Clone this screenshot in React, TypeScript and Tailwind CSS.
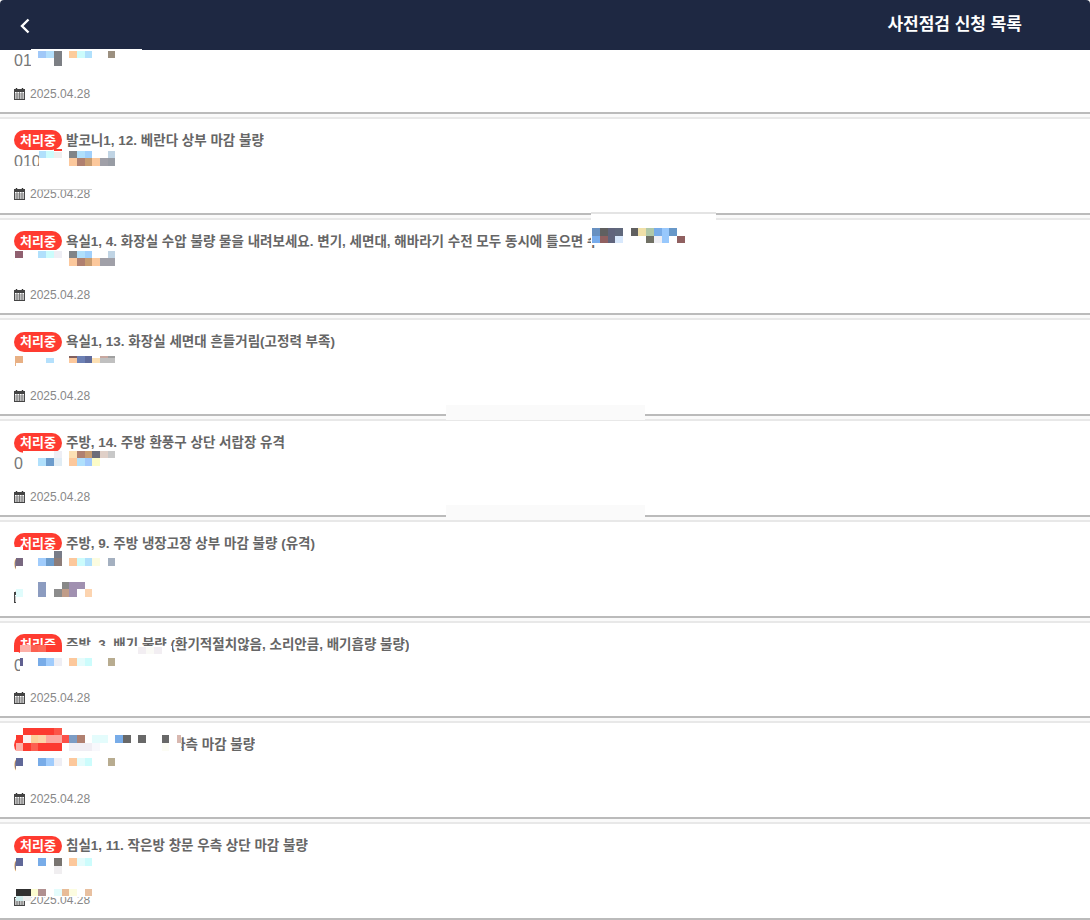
const FONT_STACK = "font-['Liberation_Sans','Noto_Sans_CJK_KR',sans-serif]";

type Request = { title: string; phone: string };

const REQUESTS: Request[] = [
  { title: "발코니1, 10. 베란다 창호 마감 불량", phone: "010-1234-56" },
  { title: "발코니1, 12. 베란다 상부 마감 불량", phone: "010-1234-56" },
  { title: "욕실1, 4. 화장실 수압 불량 물을 내려보세요. 변기, 세면대, 해바라기 수전 모두 동시에 틀으면 수", phone: "010-1234-56" },
  { title: "욕실1, 13. 화장실 세면대 흔들거림(고정력 부족)", phone: "010-1234-56" },
  { title: "주방, 14. 주방 환풍구 상단 서랍장 유격", phone: "010-1234-56" },
  { title: "주방, 9. 주방 냉장고장 상부 마감 불량 (유격)", phone: "010-1234-56" },
  { title: "주방, 3. 배기 불량 (환기적절치않음, 소리안큼, 배기흡량 불량)", phone: "010-1234-56" },
  { title: "거실1, 15. 거실 창 좌측 마감 불량", phone: "010-1234-56" },
  { title: "침실1, 11. 작은방 창문 우측 상단 마감 불량", phone: "010-1234-56" },
];

// x1, x2, y1, y2, colour
type Cell = [number, number, number, number, string];

// Blurred patches that sit on top of the list.
const PATCHES: Cell[] = [
  // row 1
  [31, 142, 49, 70, "#fff"],
  [38, 46, 51, 58, "#a0c8f8"], [46, 54, 51, 58, "#b4e0fc"], [54, 62, 51, 66, "#7c7f84"],
  [69, 77, 51, 58, "#fccc9c"], [77, 85, 51, 58, "#ccfcfc"], [85, 92, 51, 58, "#b0e0fc"], [108, 115, 51, 58, "#9c9080"],
  // row 2
  [39, 116, 150, 170, "#fff"], [14, 39, 166, 171, "#fff"],
  [54, 62, 149, 151, "#ff3b30"],
  [39, 46, 151, 158, "#b0e0fc"], [46, 54, 151, 158, "#ccfcfc"], [54, 62, 152, 158, "#eeeeee"],
  [69, 77, 151, 158, "#808488"], [77, 85, 151, 158, "#b0e0fc"], [85, 92, 151, 158, "#a0d0fc"], [108, 115, 151, 158, "#c0d4e4"],
  [69, 77, 158, 166, "#fcc89c"], [77, 85, 158, 166, "#b08070"], [85, 92, 158, 166, "#c89c70"], [92, 100, 158, 166, "#fcc89c"],
  [100, 108, 158, 166, "#a0a0a8"], [108, 115, 158, 166, "#989ca4"],
  [38, 92, 189, 190, "#cfcfcf"],
  // row 3
  [14, 116, 250, 272, "#fff"],
  [15, 23, 251, 258, "#906070"], [38, 46, 251, 258, "#b0e0fc"], [46, 54, 251, 258, "#ccfcfc"], [54, 62, 251, 258, "#eeeef4"],
  [69, 77, 251, 258, "#808488"], [77, 85, 251, 258, "#b0e0fc"], [85, 92, 251, 258, "#a0d0fc"], [108, 115, 251, 258, "#c0d4e4"],
  [69, 77, 258, 266, "#fcc89c"], [77, 85, 258, 266, "#b08070"], [85, 92, 258, 266, "#c89c70"], [92, 100, 258, 266, "#fcc89c"], [100, 115, 258, 266, "#a0a0a8"],
  [591, 716, 212, 245, "#fff"], [591, 716, 212, 214, "#e4e4e4"],
  [592, 600, 228, 236, "#6890c0"], [600, 608, 228, 236, "#606060"], [608, 615, 228, 236, "#60647c"], [615, 623, 228, 236, "#60687c"],
  [592, 600, 236, 243, "#78acec"], [600, 608, 236, 243, "#906060"], [608, 615, 236, 243, "#60647c"], [615, 623, 236, 243, "#d8e8fc"],
  [631, 638, 228, 236, "#606060"], [638, 646, 228, 236, "#f0e0a8"], [646, 654, 228, 236, "#b0c8a8"], [654, 662, 228, 236, "#78ace8"], [662, 669, 228, 236, "#98c8fc"], [669, 677, 228, 236, "#6898c8"],
  [646, 654, 236, 243, "#707064"], [654, 662, 236, 243, "#eeeef4"], [662, 669, 236, 243, "#98c8fc"], [677, 685, 236, 243, "#906060"],
  // row 4
  [14, 116, 352, 374, "#fff"],
  [15, 23, 356, 363, "#e8b084"], [15, 16, 363, 366, "#e8b084"], [46, 54, 358, 363, "#b4e0fc"],
  [69, 77, 356, 358, "#806060"], [69, 77, 358, 363, "#fcc89c"], [77, 85, 356, 363, "#6c80b4"], [85, 92, 356, 363, "#606c9c"], [92, 100, 358, 363, "#fce0b4"],
  [100, 108, 356, 358, "#c8a8a0"], [108, 115, 356, 358, "#a0a0a0"], [100, 115, 358, 363, "#c0c0c0"],
  // row 5
  [23, 116, 451, 474, "#fff"],
  [54, 62, 451, 458, "#eeeef4"], [69, 77, 451, 458, "#fce0b4"], [77, 85, 451, 458, "#b08070"], [85, 92, 451, 458, "#c89c70"], [92, 100, 451, 458, "#6c6c78"], [100, 108, 451, 458, "#e0d0c8"], [108, 115, 451, 458, "#c8c8c8"],
  [38, 46, 458, 466, "#b0e0fc"], [46, 54, 458, 466, "#6c9ccc"], [54, 62, 458, 466, "#e0ecf4"], [69, 77, 458, 466, "#fcc89c"], [77, 85, 458, 466, "#b0e0fc"], [85, 92, 458, 466, "#a0c8fc"], [92, 100, 458, 466, "#fcfcc8"],
  [446, 645, 405, 420, "#fafafa"],
  [446, 645, 505, 520, "#fafafa"],
  // row 6
  [16, 116, 550, 574, "#fff"], [14, 23, 547, 551, "#fff"],
  [54, 62, 551, 558, "#787c88"],
  [16, 23, 558, 566, "#786880"], [38, 46, 558, 566, "#a0ccfc"], [46, 54, 558, 566, "#6c9ccc"], [54, 62, 558, 566, "#8c7c78"],
  [69, 77, 558, 566, "#fcc89c"], [77, 85, 558, 566, "#ccfcfc"], [85, 92, 558, 566, "#b0e0fc"], [92, 100, 558, 566, "#fcfce0"], [108, 115, 558, 566, "#a4b0c0"],
  [16, 120, 574, 606, "#fff"],
  [38, 46, 582, 589, "#8c9cc0"], [62, 69, 582, 589, "#888888"], [69, 85, 582, 589, "#a090b0"],
  [16, 23, 589, 597, "#e0fcfc"], [38, 46, 589, 597, "#8c9cc0"], [54, 62, 589, 597, "#8c8c8c"], [62, 69, 589, 597, "#c09c88"], [69, 77, 589, 597, "#a090b0"], [85, 92, 589, 597, "#fcd4b0"],
  // row 7
  [20, 172, 646, 674, "#fff"],
  [14, 23, 645, 652, "#ff3b30"],
  [20, 31, 645, 652, "#fcb0a8"], [31, 38, 645, 652, "#fc6050"], [38, 46, 645, 652, "#fc6858"], [46, 62, 645, 652, "#ff3b30"],
  [138, 146, 647, 654, "#f2eef2"], [146, 154, 647, 654, "#fafaf6"], [154, 162, 647, 654, "#f2eef2"],
  [20, 23, 658, 666, "#606090"], [38, 46, 658, 666, "#78ace8"], [46, 54, 658, 666, "#a0ccfc"], [54, 62, 658, 666, "#eeeef4"],
  [69, 77, 658, 666, "#fcc89c"], [77, 85, 658, 666, "#e4fcfc"], [85, 92, 658, 666, "#ccfcfc"], [108, 115, 658, 666, "#b8ac90"],
  // row 8
  [16, 181, 726, 774, "#fff"],
  [23, 54, 728, 735, "#fc3a30"], [54, 62, 728, 735, "#fc5548"],
  [16, 23, 735, 743, "#fc3a30"], [23, 31, 735, 743, "#fcf0f0"], [31, 38, 735, 743, "#fcd098"], [38, 46, 735, 743, "#fcd4a8"], [46, 62, 735, 743, "#fca8a0"], [62, 69, 735, 743, "#fc5048"],
  [69, 77, 735, 743, "#7c9cc4"], [77, 85, 735, 743, "#b08070"], [92, 108, 735, 743, "#e4fcfc"], [115, 123, 735, 743, "#78ace8"], [123, 131, 735, 743, "#686868"], [138, 146, 735, 743, "#686868"], [162, 169, 735, 743, "#686868"], [177, 181, 735, 743, "#d8b8b0"],
  [16, 23, 743, 751, "#fcb0a8"], [23, 31, 743, 751, "#fc3a30"], [31, 38, 743, 751, "#fc6050"], [38, 62, 743, 751, "#fc3a30"], [69, 92, 743, 751, "#f0eef4"], [92, 100, 743, 751, "#f8f8fc"], [162, 169, 743, 751, "#fcfcf4"],
  [16, 23, 758, 766, "#606898"], [38, 46, 758, 766, "#78ace8"], [46, 54, 758, 766, "#a0ccfc"], [54, 62, 758, 766, "#eeeef4"],
  [69, 77, 758, 766, "#fcc89c"], [77, 85, 758, 766, "#e4fcfc"], [85, 92, 758, 766, "#ccfcfc"], [108, 115, 758, 766, "#b8ac90"],
  // row 9
  [16, 116, 853, 878, "#fff"],
  [16, 23, 858, 866, "#606898"], [38, 46, 858, 866, "#78ace8"], [54, 62, 858, 866, "#787470"], [69, 77, 858, 866, "#fcc89c"], [77, 85, 858, 866, "#e4fcfc"], [85, 92, 858, 866, "#ccfcfc"], [54, 62, 866, 874, "#f0eef0"],
  [14, 120, 886, 897, "#fff"],
  [16, 31, 889, 896, "#303030"], [31, 38, 889, 896, "#fcfcd0"], [38, 46, 889, 896, "#b09090"], [54, 62, 889, 896, "#e4fcfc"], [62, 69, 889, 896, "#e8bc98"], [69, 77, 889, 896, "#fcfce0"], [85, 92, 889, 896, "#e8c0a0"],
  [16, 23, 896, 901, "#d0ecec"], [23, 31, 896, 901, "#eeeeee"],
];

function CalendarIcon() {
  return (
    <svg width="11" height="12" viewBox="0 0 11 12" fill="none" className="shrink-0">
      <path d="M2.5 0v2.5M8.5 0v2.5" stroke="#333" strokeWidth="1.4" />
      <rect x="0.5" y="1.5" width="10" height="10" stroke="#444" />
      <rect x="0.5" y="1.5" width="10" height="2.5" fill="#444" />
      <path d="M0.5 6h10M0.5 8h10M0.5 10h10M3 4v7M5.5 4v7M8 4v7" stroke="#666" strokeWidth="0.8" />
    </svg>
  );
}

function RequestRow({ title, phone }: Request) {
  return (
    <div className="mb-[3px] h-[97.75px] border-y-2 border-t-[#e8e8e8] border-b-[#bbbbbb] bg-white pl-[14px] pt-[11px]">
      <div className="flex items-center gap-1">
        <span className="flex h-[20px] w-[48px] shrink-0 items-center justify-center rounded-full bg-[#ff3b30] text-[13px] leading-none font-bold text-white">
          처리중
        </span>
        <p className="truncate pt-px text-[13.5px] leading-[20px] font-bold text-[#666666]">{title}</p>
      </div>
      <p className="mt-[1px] text-[16px] leading-[20px] text-[#777777]">{phone}</p>
      <div className="mt-[12.5px] flex items-center gap-[5px] text-[12px] leading-[20px] text-[#888888]">
        <CalendarIcon />
        <span>2025.04.28</span>
      </div>
    </div>
  );
}

export default function App() {
  return (
    <div className={`relative h-[920px] w-[1090px] overflow-hidden bg-[#fafafa] ${FONT_STACK}`}>
      <header className="relative z-10 flex h-[50px] items-center justify-between rounded-t-[4px] bg-[#1e2842] pr-[68px] pl-[20px]">
        <svg width="10" height="16" viewBox="0 0 10 16" fill="none" className="mt-[2px]">
          <path d="M8.5 1.5 2 8l6.5 6.5" stroke="#fff" strokeWidth="2.4" />
        </svg>
        <h1 className="text-[17px] font-bold text-white">사전점검 신청 목록</h1>
      </header>

      <div className="-mt-[34px]">
        {REQUESTS.map((request) => (
          <RequestRow key={request.title} {...request} />
        ))}
      </div>

      {PATCHES.map(([x1, x2, y1, y2, color], i) => (
        <div
          key={i}
          className="absolute z-20"
          style={{ left: x1, top: y1, width: x2 - x1, height: y2 - y1, background: color }}
        />
      ))}
    </div>
  );
}
